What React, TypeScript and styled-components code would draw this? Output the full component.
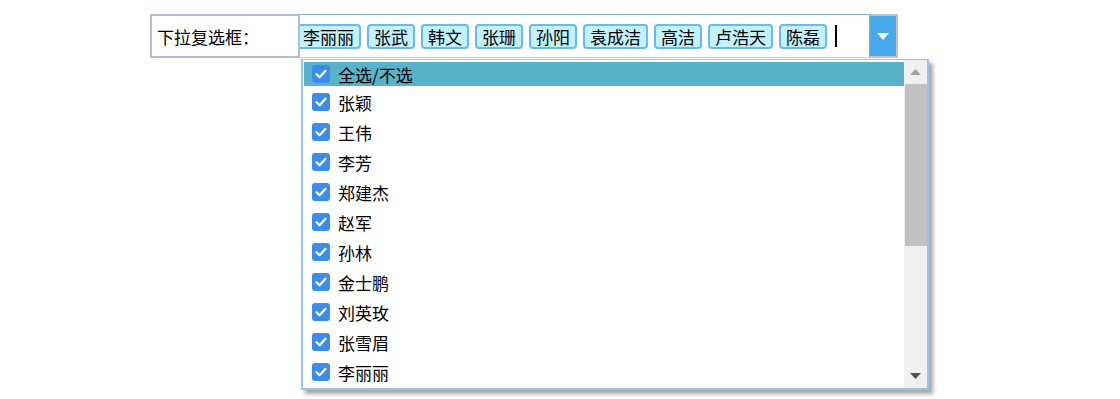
import React from 'react';
import styled, { createGlobalStyle } from 'styled-components';

const GlobalStyle = createGlobalStyle`
  body {
    margin: 0;
    background: #fff;
    font-family: "Microsoft YaHei", "Noto Sans CJK SC", "Noto Sans", sans-serif;
    color: #000;
  }
`;

const Page = styled.div`
  padding: 14px 0 0 150px;
  height: 385px;
`;

const Field = styled.div`
  display: flex;
  align-items: stretch;
  height: 44px;
`;

const Label = styled.div`
  width: 150px;
  border: 2px solid #b9bdd0;
  display: flex;
  align-items: center;
  padding-left: 5px;
  box-sizing: border-box;
  font-size: 17px;
  flex-shrink: 0;
`;

const Combo = styled.div`
  position: relative;
  display: flex;
  width: 600px;
  margin-left: -2px;
`;

const TagBox = styled.div`
  flex: 1;
  display: flex;
  align-items: center;
  justify-content: flex-end;
  overflow: hidden;
  border: 1px solid #87b3e2;
  border-left: 2px solid #b9bdd0;
  border-bottom-color: #b7cfee;
  background: #fff;
  padding-right: 32px;
  gap: 6px;
  box-sizing: border-box;
`;

const Tag = styled.span`
  flex-shrink: 0;
  height: 25px;
  line-height: 22px;
  padding: 0 5px;
  font-size: 17px;
  background: #c3f2fd;
  border: 2px solid #6ab9ef;
  border-radius: 4px;
  box-sizing: border-box;
  white-space: nowrap;
`;

const Caret = styled.span`
  flex-shrink: 0;
  width: 2px;
  height: 22px;
  background: #000;
  margin-left: 2px;
`;

const ArrowButton = styled.div`
  width: 28px;
  flex-shrink: 0;
  background: #48a9ea;
  border: 2px solid #c3c3c3;
  border-left: none;
  box-sizing: border-box;
  display: flex;
  align-items: center;
  justify-content: center;
`;

const Dropdown = styled.div`
  position: absolute;
  left: 3px;
  top: 45px;
  width: 628px;
  height: 331px;
  box-sizing: border-box;
  border: 2px solid #9cc3ef;
  border-top-width: 1px;
  background: #fff;
  box-shadow: 4px 4px 4px rgba(0, 0, 0, 0.35);
  display: flex;
`;

const List = styled.div`
  flex: 1;
  overflow: hidden;
  padding: 2px 0 0 1px;
`;

const Row = styled.div<{ $active?: boolean }>`
  display: flex;
  align-items: center;
  gap: 8px;
  height: ${(p) => (p.$active ? '24px' : '30px')};
  margin-bottom: ${(p) => (p.$active ? '1px' : '0')};
  padding-left: 8px;
  font-size: 17px;
  background: ${(p) => (p.$active ? '#59b3c8' : 'transparent')};
`;

const Check = styled.span`
  width: 18px;
  height: 18px;
  border-radius: 3px;
  background: #3b8de9;
  display: flex;
  align-items: center;
  justify-content: center;
  flex-shrink: 0;
`;

const Scrollbar = styled.div`
  width: 23px;
  background: #f0f0f0;
  display: flex;
  flex-direction: column;
`;

const ScrollArrow = styled.div`
  height: 24px;
  display: flex;
  align-items: center;
  justify-content: center;
  flex-shrink: 0;
`;

const Track = styled.div`
  flex: 1;
`;

const Thumb = styled.div`
  height: 162px;
  margin-left: 1px;
  background: #c1c1c1;
`;

const names = [
  '张颖', '王伟', '李芳', '郑建杰', '赵军', '孙林', '金士鹏', '刘英玫', '张雪眉',
  '李丽丽', '张武', '韩文', '张珊', '孙阳', '袁成洁', '高洁', '卢浩天', '陈磊',
];

// the tag strip is scrolled to its end; only the tail is in view
const visibleTags = names.slice(9);

const CheckMark = () => (
  <Check>
    <svg width="14" height="14" viewBox="0 0 14 14">
      <path d="M2.5 7.2 L5.6 10.2 L11.5 3.8" fill="none" stroke="#fff" strokeWidth="2.2" strokeLinecap="round" strokeLinejoin="round" />
    </svg>
  </Check>
);

export default function App() {
  return (
    <Page>
      <GlobalStyle />
      <Field>
        <Label>下拉复选框：</Label>
        <Combo>
          <TagBox>
            {visibleTags.map((n) => (
              <Tag key={n}>{n}</Tag>
            ))}
            <Caret />
          </TagBox>
          <ArrowButton>
            <svg width="12" height="7" viewBox="0 0 12 7">
              <path d="M0 0 H12 L6 7 Z" fill="#fff" />
            </svg>
          </ArrowButton>
          <Dropdown>
            <List>
              <Row $active>
                <CheckMark />
                全选/不选
              </Row>
              {names.slice(0, 11).map((n) => (
                <Row key={n}>
                  <CheckMark />
                  {n}
                </Row>
              ))}
            </List>
            <Scrollbar>
              <ScrollArrow>
                <svg width="11" height="6" viewBox="0 0 11 6">
                  <path d="M0 6 H11 L5.5 0 Z" fill="#a3a3a3" />
                </svg>
              </ScrollArrow>
              <Track>
                <Thumb />
              </Track>
              <ScrollArrow>
                <svg width="11" height="6" viewBox="0 0 11 6">
                  <path d="M0 0 H11 L5.5 6 Z" fill="#505050" />
                </svg>
              </ScrollArrow>
            </Scrollbar>
          </Dropdown>
        </Combo>
      </Field>
    </Page>
  );
}
